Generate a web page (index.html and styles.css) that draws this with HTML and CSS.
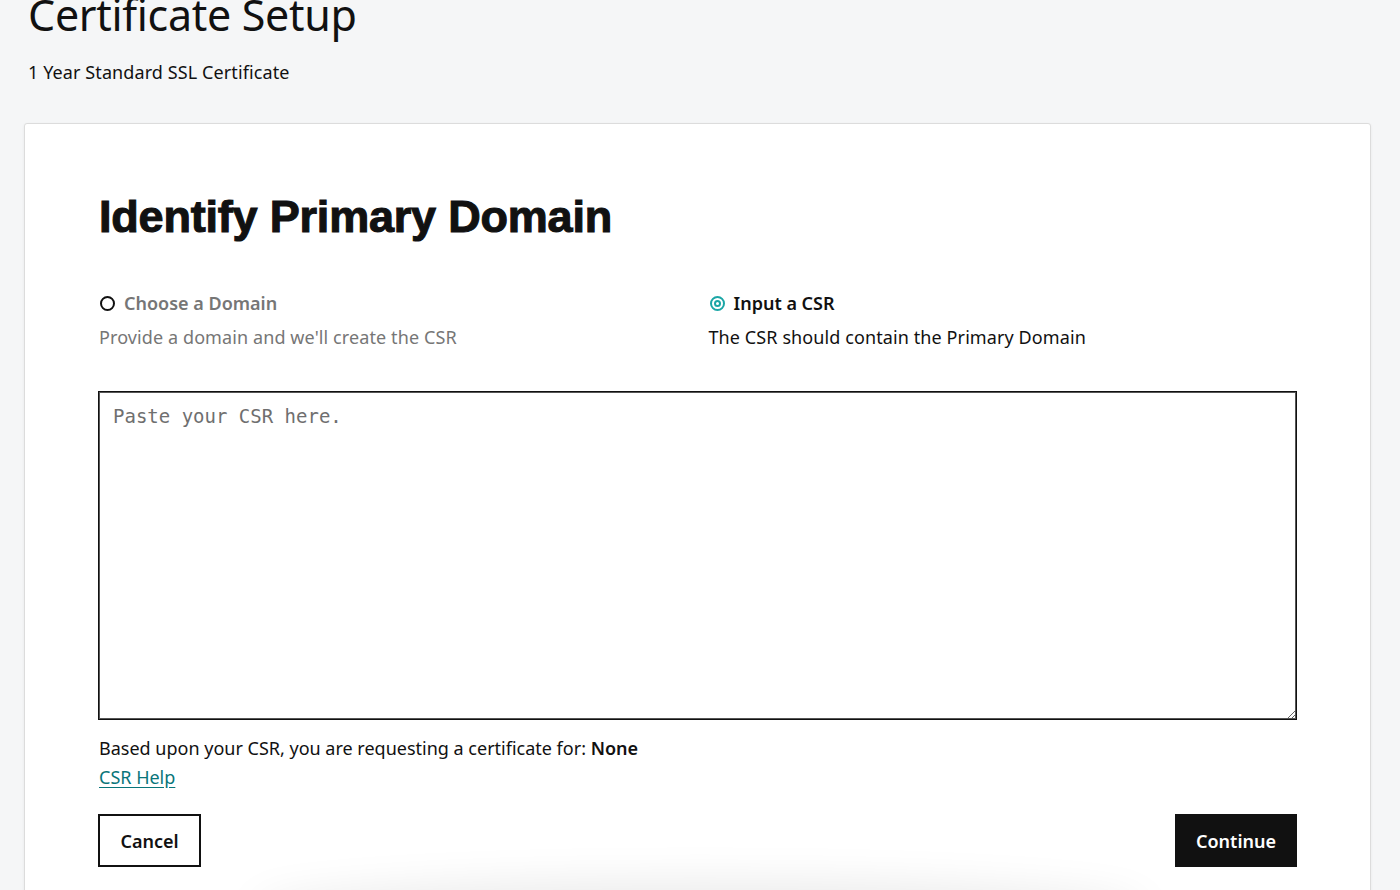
FILE: index.html
```html
<!DOCTYPE html>
<html lang="en">
<head>
<meta charset="utf-8">
<title>Certificate Setup</title>
<link rel="stylesheet" href="styles.css">
</head>
<body>
<header class="page-header">
  <h1 class="page-title">Certificate Setup</h1>
  <p class="page-subtitle">1 Year Standard SSL Certificate</p>
</header>
<main class="card">
  <h2 class="card-title">Identify Primary Domain</h2>
  <div class="options">
    <label class="option">
      <span class="option-head">
        <span class="radio"></span>
        <span class="option-label muted">Choose a Domain</span>
      </span>
      <span class="option-desc muted">Provide a domain and we'll create the CSR</span>
    </label>
    <label class="option">
      <span class="option-head">
        <span class="radio radio-on"><span class="radio-dot"></span></span>
        <span class="option-label">Input a CSR</span>
      </span>
      <span class="option-desc">The CSR should contain the Primary Domain</span>
    </label>
  </div>
  <textarea class="csr-input" placeholder="Paste your CSR here." autofocus></textarea>
  <p class="request-note">Based upon your CSR, you are requesting a certificate for: <strong>None</strong></p>
  <a class="help-link" href="#">CSR Help</a>
  <div class="actions">
    <button class="btn btn-outline" type="button">Cancel</button>
    <button class="btn btn-solid" type="button">Continue</button>
  </div>
</main>
<div class="bottom-shadow"></div>
</body>
</html>
```

FILE: styles.css
```css
html, body {
  margin: 0;
  padding: 0;
}
body {
  background: #f5f6f7;
  font-family: "Noto Sans", "Lato", sans-serif;
  color: #111;
  height: 890px;
  overflow: hidden;
}
.page-header {
  padding: 0 28px;
}
.page-title {
  margin: -11px 0 0;
  font-size: 43px;
  font-weight: 400;
  line-height: 52px;
  color: #111;
  letter-spacing: -0.3px;
}
.page-subtitle {
  margin: 19px 0 0;
  font-size: 18px;
  line-height: 24px;
  color: #111;
  letter-spacing: 0.1px;
}
.card {
  margin: 39px 29px 0 24px;
  background: #fff;
  border: 1px solid #dcdcdc;
  border-radius: 3px;
  box-shadow: 0 1px 3px rgba(0,0,0,0.06);
  padding: 67px 73px 40px 73px;
  min-height: 900px;
  box-sizing: border-box;
}
.card-title {
  margin: 0 0 0 1px;
  font-family: "Liberation Sans", Arial, sans-serif;
  font-weight: 700;
  font-size: 45px;
  line-height: 52px;
  color: #111;
  -webkit-text-stroke: 1.1px #111;
  letter-spacing: -0.2px;
}
.options {
  display: grid;
  grid-template-columns: 1fr 1fr;
  column-gap: 20px;
  margin-top: 47px;
}
.option {
  display: flex;
  flex-direction: column;
  gap: 8px;
}
.option-head {
  display: flex;
  align-items: center;
  gap: 9px;
  padding-left: 2px;
}
.radio {
  width: 11px;
  height: 11px;
  border: 2px solid #111;
  border-radius: 50%;
  display: flex;
  align-items: center;
  justify-content: center;
  flex: none;
}
.radio-on {
  border-color: #1ba6a6;
}
.radio-dot {
  width: 3px;
  height: 3px;
  border: 2px solid #1ba6a6;
  border-radius: 50%;
}
.option-label {
  font-size: 18px;
  font-weight: 600;
  line-height: 26px;
  color: #111;
}
.option-desc {
  font-size: 18px;
  line-height: 26px;
  color: #111;
  padding-left: 1px;
  letter-spacing: 0.1px;
}
.muted {
  color: #767676;
}
.csr-input {
  display: block;
  width: 100%;
  height: 329px;
  margin-top: 41px;
  box-sizing: border-box;
  border: 1px solid #111;
  box-shadow: inset 0 0 0 1px #555;
  border-radius: 0;
  padding: 11px 14px;
  font-family: "DejaVu Sans Mono", "Liberation Mono", monospace;
  font-size: 19px;
  line-height: 26px;
  color: #111;
  background: #fff;
  resize: vertical;
  outline: none;
  caret-color: #333;
}
.csr-input::placeholder {
  color: #6f6f6f;
}
.request-note {
  margin: 15px 0 0 1px;
  font-size: 18px;
  line-height: 26px;
  color: #111;
}
.request-note strong {
  font-weight: 600;
}
.help-link {
  display: inline-block;
  margin: 3px 0 0 1px;
  font-size: 18px;
  line-height: 26px;
  color: #09757a;
  text-decoration: underline;
  text-underline-offset: 3px;
}
.actions {
  display: flex;
  justify-content: space-between;
  margin-top: 24px;
}
.btn {
  height: 53px;
  font-family: "Noto Sans", "Lato", sans-serif;
  font-size: 18px;
  font-weight: 600;
  padding: 0 10px;
  border-radius: 0;
  cursor: pointer;
}
.btn-outline {
  width: 103px;
  background: #fff;
  color: #111;
  border: 2px solid #111;
}
.btn-solid {
  width: 122px;
  background: #111;
  color: #fff;
  border: none;
}
.bottom-shadow {
  position: fixed;
  left: 260px;
  right: 260px;
  bottom: -40px;
  height: 40px;
  background: #fff;
  box-shadow: 0 0 40px 10px rgba(0,0,0,0.08);
  border-radius: 50%;
}
```
